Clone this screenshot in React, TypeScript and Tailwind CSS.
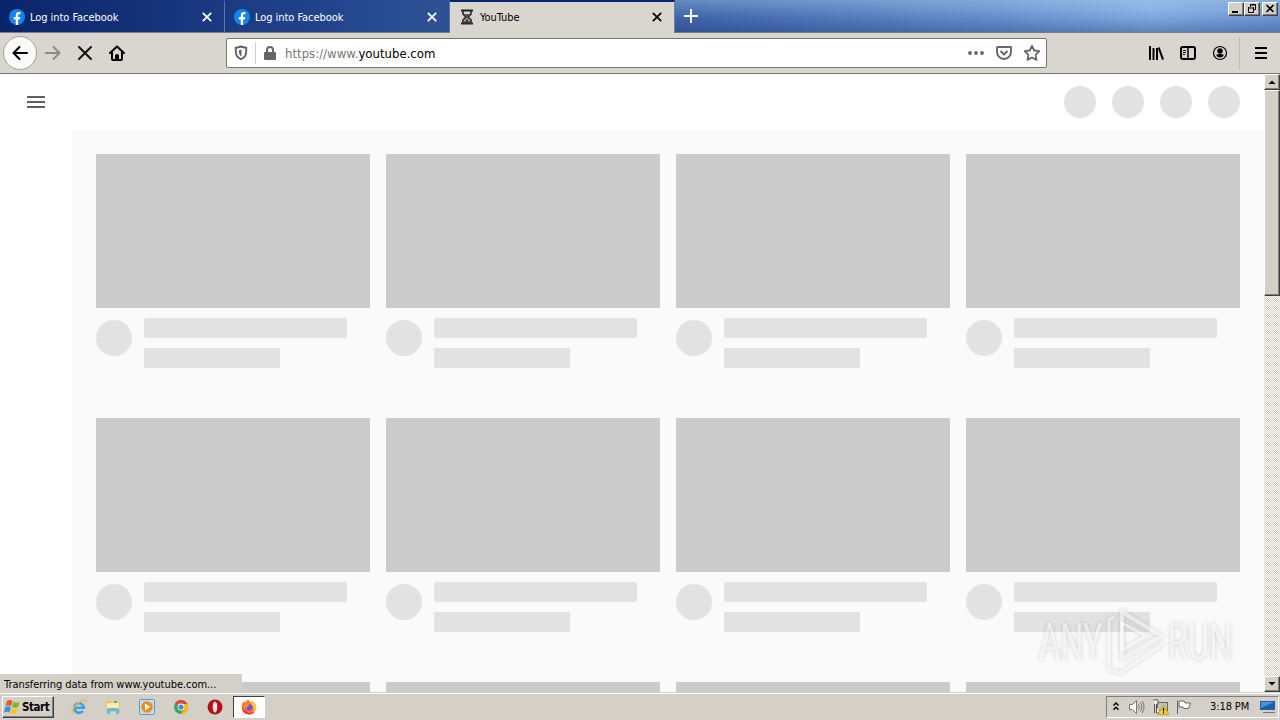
import type { ReactNode } from 'react';

const BEVEL =
  'border border-t-white border-l-white border-r-[#404040] border-b-[#404040] shadow-[inset_-1px_-1px_0_#808080]';

const FacebookIcon = () => (
  <svg width="16" height="16" viewBox="0 0 16 16" className="shrink-0">
    <circle cx="8" cy="8" r="8" fill="#1583ee" />
    <path
      d="M6.8 16v-5.6h-2V8h2V6.3c0-2 1.2-3.2 3-3.2.9 0 1.6.1 1.6.1v2h-1c-1 0-1.3.6-1.3 1.2V8h2.2l-.4 2.4H9.1V16z"
      fill="#fff"
    />
  </svg>
);

const HourglassIcon = () => (
  <svg width="16" height="16" viewBox="0 0 16 16" className="shrink-0">
    <path d="M2 1.5h12M2 14.5h12" stroke="#222" strokeWidth="2" />
    <path d="M4 2v3l3 3-3 3v3h8v-3L9 8l3-3V2" fill="none" stroke="#333" strokeWidth="1.8" />
    <path d="M5.5 5h5L8 8zM8 9l3 4H5z" fill="#555" />
  </svg>
);

const CloseIcon = () => (
  <svg width="10" height="10" viewBox="0 0 10 10" className="shrink-0">
    <path d="M.8.8l8.4 8.4M9.2.8L.8 9.2" stroke="currentColor" strokeWidth="1.7" />
  </svg>
);

interface TabProps {
  icon: ReactNode;
  title: string;
  active?: boolean;
}

const Tab = ({ icon, title, active }: TabProps) => (
  <div
    className={
      active
        ? 'h-[33px] w-[225px] shrink-0 border-t-2 border-r border-r-[#70809c] border-t-[#0a246a] bg-[#d9d6d0] text-black'
        : 'h-[33px] w-[225px] shrink-0 border-t-2 border-r border-t-transparent border-r-[#5a74b2] text-white'
    }
  >
    <div className="flex h-[30px] items-center pr-[12px] pl-[9px]">
      {icon}
      <span className="mt-px ml-[5px] flex-1 tracking-[-0.05px] whitespace-pre">{title}</span>
      <CloseIcon />
    </div>
  </div>
);

const WindowButtons = () => (
  <div className="mt-[2px] mr-[2px] ml-auto flex h-[14px]">
    <div className={`flex w-4 justify-center bg-[#d4d0c8] ${BEVEL}`}>
      <svg width="12" height="12" viewBox="0 0 12 12">
        <path d="M2 9h6" stroke="#000" strokeWidth="2" />
      </svg>
    </div>
    <div className={`mr-[2px] flex w-4 justify-center bg-[#d4d0c8] ${BEVEL}`}>
      <svg width="12" height="12" viewBox="0 0 12 12" fill="none" stroke="#000">
        <path d="M4.5 4V1.5h5v5H8M4 2h6" />
        <path d="M2.5 4v5.500h5V4.500M2 5h6" />
      </svg>
    </div>
    <div className={`flex w-4 justify-center bg-[#d4d0c8] ${BEVEL}`}>
      <svg width="12" height="12" viewBox="0 0 12 12">
        <path d="M2.500 2l7 7M9.500 2l-7 7" stroke="#000" strokeWidth="1.600" />
      </svg>
    </div>
  </div>
);

const TitleBar = () => (
  <div className="flex h-[33px] bg-[linear-gradient(to_right,#0a246a_0%,#22438c_25%,#2f5296_35%,#4268aa_54%,#6c93cf_78%,#85aee3_90%,#7199d3_100%)] shadow-[inset_0_-1px_0_#777c84]">
    <Tab icon={<FacebookIcon />} title="Log into Facebook" />
    <Tab icon={<FacebookIcon />} title="Log into Facebook" />
    <Tab icon={<HourglassIcon />} title="YouTube" active />
    <div className="flex h-8 flex-1 bg-[linear-gradient(to_bottom,rgba(190,220,250,0.3)_0%,rgba(190,220,250,0.12)_30%,rgba(20,40,110,0.05)_55%,rgba(20,40,110,0.32)_100%)]">
      <svg width="14" height="14" viewBox="0 0 14 14" className="mt-[9px] ml-[9px]">
        <path d="M7 0v14M0 7h14" stroke="#fff" strokeWidth="2" />
      </svg>
      <WindowButtons />
    </div>
  </div>
);

const AddressBar = () => (
  <div className="flex h-[30px] w-[821px] items-center rounded-[2px] border border-[#77756f] bg-white">
    <svg width="14" height="16" viewBox="0 0 14 16" className="ml-[7px]" fill="none" stroke="#606060">
      <path d="M7 1.500c2 .8 3.500 1 5.200 1.200v4c0 3.500-2 6-5.200 7.500-3.200-1.500-5.200-4-5.200-7.500v-4C3.500 2.500 5 2.300 7 1.500z" strokeWidth="1.900" />
      <path d="M7.500 4.500v7c-2-1.200-2.700-3-2.700-6z" fill="#606060" stroke="none" />
    </svg>
    <div className="ml-[7px] h-[22px] w-px bg-[#ccc]" />
    <svg width="12" height="14" viewBox="0 0 12 14" className="ml-[8px]">
      <rect x="0" y="6" width="12" height="8" rx="1" fill="#666" />
      <path d="M3 7V4a3 3 0 016 0v3" fill="none" stroke="#666" strokeWidth="2" />
    </svg>
    <span className="mt-px ml-[9px] flex-1 text-[13px] tracking-[0.02px] whitespace-pre text-[#777]">
      https://www.<span className="text-black">youtube.com</span>
    </span>
    <svg width="16" height="4" viewBox="0 0 16 4" fill="#666">
      <circle cx="2" cy="2" r="1.900" />
      <circle cx="8" cy="2" r="1.900" />
      <circle cx="14" cy="2" r="1.900" />
    </svg>
    <svg width="18" height="16" viewBox="0 0 18 16" className="ml-[11px]" fill="none" stroke="#666" strokeWidth="1.900">
      <path d="M2.500 2h13q.5 0 .5.500V7a7 7 0 01-14 0V2.500Q2 2 2.500 2z" />
      <path d="M5.500 6L9 9.500 12.500 6" />
    </svg>
    <svg width="18" height="18" viewBox="0 0 18 18" className="mr-[5px] ml-[10px]" fill="none" stroke="#666" strokeWidth="1.800" strokeLinejoin="round">
      <path d="M9 1.800l2.200 4.700 5.100.7-3.700 3.600.9 5.100L9 13.500l-4.500 2.400.9-5.100L1.700 7.200l5.100-.7z" />
    </svg>
  </div>
);

const Toolbar = () => (
  <div className="flex h-[41px] items-center border-b border-[#777671] bg-[#d9d6d0]">
    <div className="ml-[3px] flex size-[34px] items-center justify-center rounded-full border border-[#a5a39d] bg-[#fafaf8]">
      <svg width="16" height="16" viewBox="0 0 16 16" fill="none" stroke="#000" strokeWidth="2" strokeLinecap="round">
        <path d="M15 8H1.500M7.500 2L1.500 8l6 6" />
      </svg>
    </div>
    <svg width="16" height="16" viewBox="0 0 16 16" className="ml-[8px]" fill="none" stroke="#8b8983" strokeWidth="2" strokeLinecap="round">
      <path d="M1 8h13.500M8.500 2l6 6-6 6" />
    </svg>
    <svg width="16" height="16" viewBox="0 0 16 16" className="ml-[16px]">
      <path d="M2 2l12 12M14 2L2 14" stroke="#111" strokeWidth="2" strokeLinecap="round" />
    </svg>
    <svg width="16" height="16" viewBox="0 0 16 16" className="ml-[16px]">
      <path d="M1 8l7-6.500L15 8M3 7.500V14q0 1 1 1h8q1 0 1-1V7.500" fill="none" stroke="#000" strokeWidth="2" strokeLinecap="round" strokeLinejoin="round" />
      <path d="M6 15v-4.500Q6 9 8 9t2 1.500V15z" />
    </svg>
    <div className="ml-[101px]">
      <AddressBar />
    </div>
    <svg width="16" height="16" viewBox="0 0 16 16" className="ml-[101px]" stroke="#000" strokeWidth="2">
      <path d="M2 1v14M5.500 3v12M9 3v12M10.700 2.500L15 14.600" />
    </svg>
    <svg width="16" height="16" viewBox="0 0 16 16" className="ml-[16px]" fill="none" stroke="#000">
      <rect x="1" y="2" width="14" height="12" rx="2" strokeWidth="2" />
      <path d="M8 2v12" strokeWidth="1.500" />
      <path d="M3 5.500h3M3 7.500h3M3 9.500h2" />
    </svg>
    <svg width="16" height="16" viewBox="0 0 16 16" className="ml-[16px]">
      <circle cx="8" cy="8" r="6.500" fill="none" stroke="#000" strokeWidth="1.200" />
      <circle cx="8" cy="6" r="2.700" />
      <path d="M4 9.800q4-1.600 8 0-1.200 2.800-4 2.800T4 9.800z" />
    </svg>
    <div className="ml-[11px] h-[33px] w-px bg-[#bfbdb6]" />
    <svg width="12" height="12" viewBox="0 0 12 12" className="ml-[15px]" stroke="#000" strokeWidth="2">
      <path d="M0 1h12M0 6h12M0 11h12" />
    </svg>
  </div>
);

const VideoSkeleton = () => (
  <div className="h-[264px] w-[274px]">
    <div className="h-[154px] bg-[#cbcbcb]" />
    <div className="flex">
      <div className="mt-3 size-9 rounded-full bg-[#e2e2e2]" />
      <div className="mt-[10px] ml-3">
        <div className="h-5 w-[203px] rounded-[2px] bg-[#e2e2e2]" />
        <div className="mt-[10px] h-5 w-[136px] rounded-[1px] bg-[#e2e2e2]" />
      </div>
    </div>
  </div>
);

const Scrollbar = () => (
  <div className="flex w-4 shrink-0 flex-col bg-white bg-[repeating-conic-gradient(#d4d0c8_0_25%,#ffffff_0_50%)] bg-[length:2px_2px]">
    <div className={`flex h-4 items-center justify-center bg-[#d4d0c8] ${BEVEL}`}>
      <svg width="8" height="4" viewBox="0 0 8 4">
        <path d="M.5 4L4 .5 7.500 4z" />
      </svg>
    </div>
    <div className={`h-[206px] bg-[#d4d0c8] ${BEVEL}`} />
    <div className={`mt-auto flex h-4 items-center justify-center bg-[#d4d0c8] ${BEVEL}`}>
      <svg width="8" height="4" viewBox="0 0 8 4">
        <path d="M.5 0h7L4 3.500z" />
      </svg>
    </div>
  </div>
);

const Watermark = () => (
  <svg
    width="216"
    height="76"
    viewBox="0 0 216 76"
    className="absolute top-[529px] left-[1028px] drop-shadow-[0_0_2px_rgba(0,0,0,0.28)]"
  >
    <g fill="#fff" fillOpacity="0.6" fontFamily="Roboto" fontSize="51">
      <text transform="translate(11 57) scale(.64 1)">ANY</text>
      <text transform="translate(140 57) scale(.64 1)">RUN</text>
    </g>
    <g fill="none" stroke="#fff" strokeOpacity="0.6" strokeLinejoin="round">
      <path d="M94 9l39 24-39 23z" strokeWidth="4" />
      <path d="M94 20v27l24-14zM86 14l-5 3v49l11 4 44-30" strokeWidth="3" />
    </g>
  </svg>
);

const Page = () => (
  <div className="relative flex h-[618px] overflow-hidden bg-white">
    <div className="flex-1">
      <div className="flex h-14 items-center pr-6 pl-[27px]">
        <div className="flex flex-col gap-[3px]">
          <div className="h-[2px] w-[18px] bg-[#606060]" />
          <div className="h-[2px] w-[18px] bg-[#606060]" />
          <div className="h-[2px] w-[18px] bg-[#606060]" />
        </div>
        <div className="ml-auto flex gap-4">
          {[...Array(4)].map((_, i) => (
            <div key={i} className="size-8 rounded-full bg-[#e2e2e2]" />
          ))}
        </div>
      </div>
      <div className="ml-[72px] grid h-[562px] grid-cols-[repeat(4,274px)] content-start gap-x-4 overflow-hidden bg-[#fafafa] pt-6 pl-6">
        {[...Array(12)].map((_, i) => (
          <VideoSkeleton key={i} />
        ))}
      </div>
    </div>
    <Scrollbar />
    <Watermark />
    <div className="absolute bottom-0 left-0 h-[18px] w-[242px] bg-[#d4d0c8] pt-[4px] pl-[4px] tracking-[-0.05px] whitespace-pre text-black">
      Transferring data from www.youtube.com...
    </div>
  </div>
);

const WindowsFlag = () => (
  <svg width="17" height="16" viewBox="0 0 17 16" className="shrink-0">
    <path d="M3 2q3-2 5.500 0L7 7.300Q4.500 5.500 1.500 7z" fill="#e9582a" />
    <path d="M9.500 2.500q3 1.800 6 .2L14 8q-3 1.500-6 0z" fill="#7eb82f" />
    <path d="M1.300 8q3-1.500 5.500.2L5.500 13.500Q3 12 0 13.300z" fill="#3593dc" />
    <path d="M7.700 9q3 1.500 6 0l-1.500 5.500q-3 1.500-6-.2z" fill="#f7c32b" />
  </svg>
);

const ExplorerIcon = () => (
  <svg width="16" height="16" viewBox="0 0 16 16">
    <path d="M3.500 8.700h9.300a4.800 4.800 0 10-1 3.300" fill="none" stroke="#35a4e5" strokeWidth="2.600" />
    <path d="M1.500 14.500C-1 11 10-1 14.500 1.500q1.200.8 0 3" fill="none" stroke="#e9bd35" strokeWidth="1.300" />
  </svg>
);

const FolderIcon = () => (
  <svg width="16" height="16" viewBox="0 0 16 16">
    <path d="M1 2h5l1 1.500h8V13H1z" fill="#e8c45e" />
    <path d="M2 4h12v7H2z" fill="#fbeeb0" />
    <path d="M2 15v-4q0-2 2-2h8q2 0 2 2v4h-3v-3H5v3z" fill="#69b8df" />
    <path d="M9 2h3v2H9z" fill="#67ae52" />
  </svg>
);

const MediaPlayerIcon = () => (
  <svg width="16" height="16" viewBox="0 0 16 16">
    <rect x=".5" y=".5" width="15" height="15" rx="1" fill="#c4ddf1" stroke="#559bd2" />
    <circle cx="8" cy="8" r="5.800" fill="#f28a19" />
    <path d="M6 4.500v7L11.500 8z" fill="#fff" />
  </svg>
);

const ChromeIcon = () => (
  <svg width="16" height="16" viewBox="0 0 16 16">
    <circle cx="8" cy="8" r="7" fill="#34a853" />
    <path d="M8 8L1.900 4.500a7 7 0 0112.200 0z" fill="#ea4335" />
    <path d="M8 5h6.400A7 7 0 018 15l3-5.500z" fill="#fbbc05" />
    <circle cx="8" cy="8" r="3.400" fill="#fff" />
    <circle cx="8" cy="8" r="2.600" fill="#4285f4" />
  </svg>
);

const OperaIcon = () => (
  <svg width="16" height="16" viewBox="0 0 16 16">
    <circle cx="8" cy="8" r="7.500" fill="#b41018" />
    <ellipse cx="8" cy="8" rx="2.300" ry="5.500" fill="#f3e4e2" />
  </svg>
);

const FirefoxIcon = () => (
  <svg width="16" height="16" viewBox="0 0 16 16">
    <path d="M1 5l2-3 1 2q1-3 4-3 0 1.500 2 2.500L11 2q4 2 4.300 6.500A7.300 7.300 0 018 15.500 7.300 7.300 0 01.700 8.500Q.6 6 1 5z" fill="#ff7a22" />
    <path d="M11 2q4 2 4.300 6.500a7 7 0 01-3 5.500Q14 9 10 5z" fill="#ffc83a" />
    <path d="M.8 9q1 6 7.200 6.500 4 0 6-3-5 3-9-.5z" fill="#f4324f" />
    <circle cx="8.300" cy="8.500" r="3.300" fill="#7450d8" />
    <path d="M3.500 5.500q3-1 5 1-3 .5-3 3-2-1.500-2-4z" fill="#ff9a2c" />
  </svg>
);

const Tray = () => (
  <div className="ml-auto flex h-[22px] w-[173px] items-center border border-t-[#808080] border-r-white border-b-white border-l-[#808080]">
    <svg width="6" height="9" viewBox="0 0 6 9" className="mb-[2px] ml-[6px]" fill="none" stroke="#000" strokeWidth="1.400">
      <path d="M.5 3.500L3 1l2.500 2.500M.5 7.800L3 5.300l2.500 2.500" />
    </svg>
    <svg width="17" height="16" viewBox="0 0 17 16" className="ml-[9px]" fill="none" stroke="#777">
      <path d="M1.500 5.500h3l4-4v13l-4-4h-3z" fill="#fafafa" />
      <path d="M10.500 5.500q1.500 2.500 0 5M12.500 3.500q3 4.500 0 9M14.300 2q3.500 6 0 12" />
    </svg>
    <svg width="17" height="16" viewBox="0 0 17 16" className="ml-[7px]" fill="none">
      <rect x="5.500" y="3.500" width="10" height="8" fill="#c2c2bd" stroke="#666" />
      <path d="M1 1h5v4H4.500v9H8M2.500 5v9" fill="#fff" stroke="#555" />
      <path d="M11.500 6L17 15.500H6z" fill="#f6d228" stroke="#b18b12" strokeWidth=".6" />
      <path d="M11.500 9v3.500M11.500 13.300v1.200" stroke="#000" strokeWidth="1.200" />
    </svg>
    <svg width="17" height="16" viewBox="0 0 17 16" className="ml-[6px]" stroke="#666">
      <path d="M2.500 15V1.500M4 2h5l1 2h5.500l-2 5.500H9L8 8H4z" fill="#fff" />
    </svg>
    <span className="ml-[18px] w-[40px] tracking-[-0.1px] whitespace-pre">3:18 PM</span>
    <svg width="16" height="14" viewBox="0 0 16 14" className="ml-[10px]">
      <path d="M0 1h15v9H0z" fill="#1e5cae" />
      <path d="M1 2h13L1 8z" fill="#4f90d6" />
      <path d="M3 12h12v1H3z" fill="#777" />
    </svg>
  </div>
);

const Taskbar = () => (
  <div className="flex h-7 items-start border-t border-[#d4d0c8] bg-[#d4d0c8] pt-[3px] pr-px pl-[2px] shadow-[inset_0_1px_0_#ffffff]">
    <div className={`flex h-[22px] w-[52px] items-center pl-px ${BEVEL}`}>
      <WindowsFlag />
      <span className="ml-px text-[11.500px] font-bold tracking-[-0.45px]">Start</span>
    </div>
    <div className="mt-[3px] ml-[17px] flex gap-[18px]">
      <ExplorerIcon />
      <FolderIcon />
      <MediaPlayerIcon />
      <ChromeIcon />
      <OperaIcon />
    </div>
    <div className="ml-[10px] flex h-[22px] w-8 items-center justify-center border border-t-[#404040] border-r-white border-b-white border-l-[#404040] bg-white">
      <FirefoxIcon />
    </div>
    <Tray />
  </div>
);

export default function App() {
  return (
    <div className="h-[720px] w-[1280px] overflow-hidden bg-white font-['DejaVu_Sans_Condensed','DejaVu_Sans',sans-serif] text-[11px] leading-[14px] text-black">
      <TitleBar />
      <Toolbar />
      <Page />
      <Taskbar />
    </div>
  );
}
